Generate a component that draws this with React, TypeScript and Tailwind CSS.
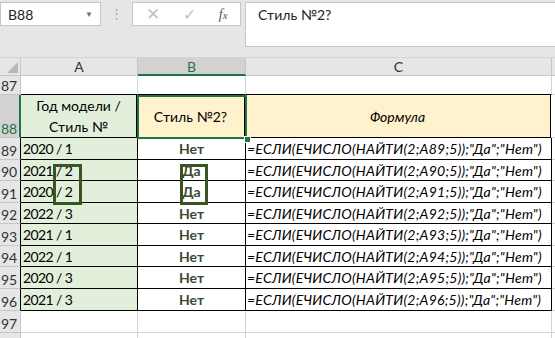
import React from "react";

const rows = [
  { n: 89, a: "2020 / 1", b: "Нет", h: "h-[22px]" },
  { n: 90, a: "2021 / 2", b: "Да", h: "h-[21px]" },
  { n: 91, a: "2020 / 2", b: "Да", h: "h-[22px]" },
  { n: 92, a: "2022 / 3", b: "Нет", h: "h-[21px]" },
  { n: 93, a: "2021 / 1", b: "Нет", h: "h-[22px]" },
  { n: 94, a: "2022 / 1", b: "Нет", h: "h-[21px]" },
  { n: 95, a: "2020 / 3", b: "Нет", h: "h-[22px]" },
  { n: 96, a: "2021 / 3", b: "Нет", h: "h-[22px]" },
];

const font = "font-['Lato','Noto_Sans',sans-serif]";

function RowHead({ n, active }: { n: number; active?: boolean }) {
  return (
    <div
      className={`w-[21px] shrink-0 flex items-end pb-[1px] pl-[1px] text-[14px] leading-none border-b border-[#c6c6c6] ${
        active
          ? "bg-[#d2d2d2] text-[#217346] border-r-2 border-r-[#217346]"
          : "bg-[#e6e6e6] text-[#333] border-r border-r-[#c6c6c6]"
      }`}
    >
      {n}
    </div>
  );
}

export default function App() {
  return (
    <div className={`w-[555px] h-[338px] overflow-hidden bg-white relative ${font}`}>
      {/* formula bar area */}
      <div className="h-[57px] bg-[#e6e6e6] flex items-start pt-[2px] gap-0">
        <div className="w-[101px] h-[24px] bg-white border border-[#c6c6c6] flex items-center px-[7px] text-[14px] text-[#222]">
          <span className="flex-1">B88</span>
          <span className="text-[8px] text-[#707070]">▼</span>
        </div>
        <div className="w-[31px] h-[24px] flex items-center justify-center text-[#a8a8a8] text-[13px]">⋮</div>
        <div className="w-[109px] h-[24px] bg-white border border-[#c6c6c6] flex items-center">
          <span className="w-[40px] text-center text-[#c2c2c2] text-[17px]">✕</span>
          <span className="w-[34px] text-center text-[#c2c2c2] text-[16px]">✓</span>
          <span className="w-[34px] text-center text-[#555] text-[14px] italic font-['Liberation_Serif',serif]">
            f<span className="text-[11px]">x</span>
          </span>
        </div>
        <div className="ml-[4px] flex-1 h-[45px] bg-white border border-[#c6c6c6] border-r-0 pl-[12px] pt-[1px] text-[14px] text-[#222]">
          Стиль №2?
        </div>
      </div>

      {/* column headers */}
      <div className="h-[19px] flex bg-[#e6e6e6] text-[14px] border-t border-[#d4d4d4]">
        <div className="w-[21px] shrink-0 border-r border-b border-[#c6c6c6] relative">
          <div className="absolute right-[2px] bottom-[2px] w-0 h-0 border-l-[11px] border-l-transparent border-b-[11px] border-b-[#b8b8b8]" />
        </div>
        <div className="w-[117px] shrink-0 border-r border-b border-[#c6c6c6] flex items-center justify-center text-[#333]">A</div>
        <div className="w-[108px] shrink-0 bg-[#d2d2d2] border-r border-[#c6c6c6] border-b-2 border-b-[#217346] flex items-center justify-center text-[#217346]">B</div>
        <div className="w-[306px] shrink-0 border-r border-b border-[#c6c6c6] flex items-center justify-center text-[#333]">C</div>
        <div className="flex-1 border-b border-[#c6c6c6]" />
      </div>

      {/* row 87 */}
      <div className="h-[19px] flex text-[14px]">
        <RowHead n={87} />
        <div className="w-[117px] shrink-0 border-r border-[#d4d4d4] border-b border-b-black" />
        <div className="w-[108px] shrink-0 border-r border-[#d4d4d4] border-b border-b-black" />
        <div className="w-[306px] shrink-0 border-r border-[#d4d4d4] border-b border-b-black" />
        <div className="flex-1 border-b border-[#d4d4d4]" />
      </div>

      {/* row 88 header */}
      <div className="h-[43px] flex text-[14px] text-black">
        <RowHead n={88} active />
        <div className="w-[116px] shrink-0 bg-[#e2efda] border-r border-b border-black flex items-center justify-center text-center leading-[21px]">
          Год модели /<br />Стиль №
        </div>
        <div className="w-[108px] shrink-0 bg-[#fff2cc] border-r border-b border-black flex items-center justify-center">
          Стиль №2?
        </div>
        <div className="w-[306px] shrink-0 bg-[#fff2cc] border-r border-b border-black flex items-center justify-center italic">
          Формула
        </div>
        <div className="flex-1 border-b border-[#d4d4d4]" />
      </div>

      {rows.map((r) => (
        <div key={r.n} className={`${r.h} flex text-[14px] text-black`}>
          <div className="w-[21px] shrink-0 flex items-end pb-[1px] pl-[1px] leading-none bg-[#e6e6e6] text-[#333] border-b border-[#c6c6c6] border-r border-r-black">
            {r.n}
          </div>
          <div className="w-[117px] shrink-0 bg-[#e2efda] border-r border-b border-black flex items-center pl-[2px] tracking-[-0.6px]">
            {r.a}
          </div>
          <div className="w-[108px] shrink-0 border-r border-b border-black flex items-center justify-center font-bold text-[#3d4a2f]">
            {r.b}
          </div>
          <div className="w-[306px] shrink-0 border-r border-b border-black flex items-center pl-[1px] italic whitespace-nowrap tracking-[0.25px]">
            =ЕСЛИ(ЕЧИСЛО(НАЙТИ(2;A{r.n};5));"Да";"Нет")
          </div>
          <div className="flex-1 border-b border-[#d4d4d4]" />
        </div>
      ))}

      {/* row 97 */}
      <div className="h-[22px] flex text-[14px]">
        <RowHead n={97} />
        <div className="w-[117px] shrink-0 border-r border-b border-[#d4d4d4]" />
        <div className="w-[108px] shrink-0 border-r border-b border-[#d4d4d4]" />
        <div className="w-[306px] shrink-0 border-r border-b border-[#d4d4d4]" />
        <div className="flex-1 border-b border-[#d4d4d4]" />
      </div>
      <div className="h-[10px] flex">
        <div className="w-[21px] shrink-0 bg-[#e6e6e6] border-r border-[#c6c6c6]" />
        <div className="w-[117px] shrink-0 border-r border-[#d4d4d4]" />
        <div className="w-[108px] shrink-0 border-r border-[#d4d4d4]" />
        <div className="w-[306px] shrink-0 border-r border-[#d4d4d4]" />
      </div>

      {/* selection B88 */}
      <div className="absolute left-[137px] top-[95px] w-[110px] h-[44px] border-2 border-[#217346]" />
      <div className="absolute left-[244px] top-[136px] w-[5px] h-[5px] bg-[#217346] border border-white box-content" />

      {/* highlight rectangles */}
      <div className="absolute left-[53px] top-[164px] w-[29px] h-[41px] border-[3px] border-[#375623]" />
      <div className="absolute left-[180px] top-[164px] w-[28px] h-[41px] border-[3px] border-[#375623]" />
    </div>
  );
}
